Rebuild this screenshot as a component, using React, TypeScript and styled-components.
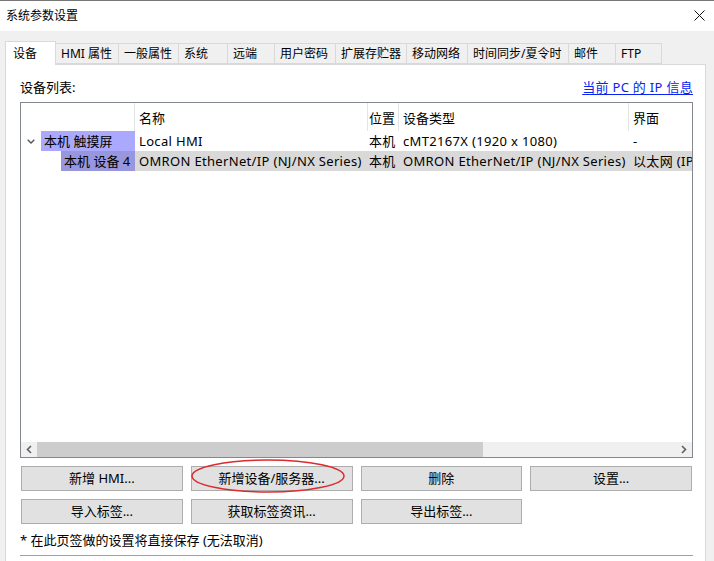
import React from 'react';
import styled, { createGlobalStyle } from 'styled-components';

const GlobalStyle = createGlobalStyle`
  html, body {
    margin: 0;
    padding: 0;
    background: #f0f0f0;
  }
  body {
    font-family: "Noto Sans", "Noto Sans CJK SC", sans-serif;
    font-size: 13px;
    color: #000;
  }
  * {
    box-sizing: border-box;
  }
`;

const Window = styled.div`
  width: 714px;
  height: 561px;
  overflow: hidden;
  display: flex;
  flex-direction: column;
  background: #f0f0f0;
`;

const TitleBar = styled.div`
  height: 31px;
  flex: none;
  display: flex;
  align-items: center;
  justify-content: space-between;
  padding: 0 9px 1px 6px;
  background: #fff;
  border-top: 1px solid #777;
  font-size: 12px;
  line-height: 16px;
`;

const Body = styled.div`
  flex: 1;
  display: flex;
  flex-direction: column;
  padding: 10px 8px 0 5px;
  min-height: 0;
`;

const TabStrip = styled.div`
  height: 23px;
  flex: none;
  display: flex;
  align-items: flex-end;
`;

const Tab = styled.div<{ $w: number; $active?: boolean }>`
  width: ${(p) => p.$w}px;
  height: ${(p) => (p.$active ? 24 : 21)}px;
  margin-bottom: ${(p) => (p.$active ? -1 : 0)}px;
  padding: ${(p) => (p.$active ? '3px 0 0 7px' : '1px 0 0 5px')};
  background: ${(p) => (p.$active ? '#fff' : '#f0f0f0')};
  border: 1px solid #d9d9d9;
  border-bottom: ${(p) => (p.$active ? 'none' : '1px solid #d9d9d9')};
  border-left: ${(p) => (p.$active ? '1px solid #d9d9d9' : 'none')};
  font-size: 12px;
  line-height: 18px;
  white-space: nowrap;
  position: relative;
  z-index: ${(p) => (p.$active ? 1 : 0)};
`;

const Panel = styled.div`
  flex: 1;
  display: flex;
  flex-direction: column;
  background: #fff;
  border: 1px solid #d9d9d9;
  border-bottom: none;
  padding: 0 12px 0 14px;
`;

const ListHeader = styled.div`
  height: 37px;
  display: flex;
  align-items: flex-end;
  justify-content: space-between;
  padding-bottom: 7px;
  line-height: 15px;
`;

const Link = styled.a`
  color: #0a23f0;
  text-decoration: underline;
  text-underline-offset: 2px;
  letter-spacing: 0.3px;
  cursor: pointer;
`;

const Table = styled.div`
  height: 356px;
  display: flex;
  flex-direction: column;
  border: 1px solid #828790;
  overflow: hidden;
`;

const cols = '114px 233px 31px 230px 1fr';

const HeadRow = styled.div`
  display: grid;
  grid-template-columns: ${cols};
  height: 28px;
  flex: none;
`;

const HeadCell = styled.div<{ $pad?: number }>`
  display: flex;
  align-items: center;
  padding-left: ${(p) => p.$pad ?? 4}px;
  border-right: 1px solid #e5e5e5;
  white-space: nowrap;
  overflow: hidden;
  &:last-child {
    border-right: none;
  }
`;

const Rows = styled.div`
  flex: 1;
`;

const Row = styled.div`
  display: grid;
  grid-template-columns: ${cols};
  height: 20px;
  line-height: 20px;
  white-space: nowrap;
  letter-spacing: 0.33px;
`;

const TreeCell = styled.div<{ $indent: number }>`
  display: flex;
  padding-left: ${(p) => p.$indent}px;
  position: relative;
  letter-spacing: 0;
`;

const Expander = styled.span`
  position: absolute;
  left: 6px;
  top: 8px;
  width: 8px;
  height: 5px;
  display: flex;
`;

const NodeLabel = styled.span<{ $bg: string }>`
  flex: 1;
  padding-left: 3px;
  background: ${(p) => p.$bg};
`;

const Cell = styled.div<{ $selected?: boolean; $pad?: number }>`
  padding-left: ${(p) => p.$pad ?? 4}px;
  overflow: hidden;
  background: ${(p) => (p.$selected ? '#d9d9d9' : 'transparent')};
`;

const HScroll = styled.div`
  height: 15px;
  flex: none;
  display: flex;
  background: #f0f0f0;
`;

const ScrollArrow = styled.div`
  width: 16px;
  display: flex;
  align-items: center;
  justify-content: center;
`;

const ScrollThumb = styled.div<{ $w: number }>`
  width: ${(p) => p.$w}px;
  background: #cdcdcd;
`;

const ScrollTrack = styled.div`
  flex: 1;
`;

const ButtonGrid = styled.div`
  display: grid;
  grid-template-columns: repeat(4, 1fr);
  gap: 8px;
  margin-top: 8px;
  padding: 0 1px;
`;

const Button = styled.button`
  height: 25px;
  position: relative;
  background: #e1e1e1;
  border: 1px solid #adadad;
  font-family: inherit;
  font-size: 13px;
  color: #000;
  padding: 0;
  line-height: 15px;
`;

const Circle = styled.svg`
  position: absolute;
  left: -2px;
  top: -8px;
  overflow: visible;
  pointer-events: none;
`;

const Note = styled.div`
  margin-top: 9px;
  line-height: 15px;
`;

const Separator = styled.div`
  margin-top: 7px;
  height: 1px;
  background: #a0a0a0;
`;

const tabs: [string, number][] = [
  ['设备', 51],
  ['HMI 属性', 63],
  ['一般属性', 60],
  ['系统', 49],
  ['远端', 47],
  ['用户密码', 61],
  ['扩展存贮器', 71],
  ['移动网络', 61],
  ['时间同步/夏令时', 101],
  ['邮件', 47],
  ['FTP', 46],
];

const Chevron = ({ dir }: { dir: 'left' | 'right' }) => (
  <svg width="6" height="9" viewBox="0 0 6 9">
    <path
      d={dir === 'left' ? 'M5 1 L1.5 4.5 L5 8' : 'M1 1 L4.5 4.5 L1 8'}
      fill="none"
      stroke="#606060"
      strokeWidth="1.6"
    />
  </svg>
);

const App: React.FC = () => (
  <>
    <GlobalStyle />
    <Window>
      <TitleBar>
        <span>系统参数设置</span>
        <svg width="11" height="11" viewBox="0 0 11 11">
          <path d="M0.5 0.5 L10.5 10.5 M10.5 0.5 L0.5 10.5" stroke="#111" strokeWidth="1" />
        </svg>
      </TitleBar>
      <Body>
        <TabStrip>
          {tabs.map(([label, w], i) => (
            <Tab key={label} $w={w} $active={i === 0}>
              {label}
            </Tab>
          ))}
        </TabStrip>
        <Panel>
          <ListHeader>
            <span>设备列表:</span>
            <Link>当前 PC 的 IP 信息</Link>
          </ListHeader>
          <Table>
            <HeadRow>
              <HeadCell />
              <HeadCell>名称</HeadCell>
              <HeadCell $pad={1}>位置</HeadCell>
              <HeadCell>设备类型</HeadCell>
              <HeadCell>界面</HeadCell>
            </HeadRow>
            <Rows>
              <Row>
                <TreeCell $indent={20}>
                  <Expander>
                    <svg width="8" height="5" viewBox="0 0 8 5">
                      <path d="M0.7 0.7 L4 4 L7.3 0.7" fill="none" stroke="#555" strokeWidth="1.4" />
                    </svg>
                  </Expander>
                  <NodeLabel $bg="#aaa9fe">本机 触摸屏</NodeLabel>
                </TreeCell>
                <Cell>Local HMI</Cell>
                <Cell $pad={1}>本机</Cell>
                <Cell>cMT2167X (1920 x 1080)</Cell>
                <Cell>-</Cell>
              </Row>
              <Row>
                <TreeCell $indent={40}>
                  <NodeLabel $bg="#9896dd">本机 设备 4</NodeLabel>
                </TreeCell>
                <Cell $selected>OMRON EtherNet/IP (NJ/NX Series)</Cell>
                <Cell $selected $pad={1}>本机</Cell>
                <Cell $selected>OMRON EtherNet/IP (NJ/NX Series)</Cell>
                <Cell $selected>以太网 (IP</Cell>
              </Row>
            </Rows>
            <HScroll>
              <ScrollArrow>
                <Chevron dir="left" />
              </ScrollArrow>
              <ScrollThumb $w={446} />
              <ScrollTrack />
              <ScrollArrow>
                <Chevron dir="right" />
              </ScrollArrow>
            </HScroll>
          </Table>
          <ButtonGrid>
            <Button>新增 HMI...</Button>
            <Button>
              新增设备/服务器...
              <Circle width="156" height="36" viewBox="0 0 156 36">
                <ellipse cx="78" cy="17" rx="76" ry="16" fill="none" stroke="#dc2a2e" strokeWidth="1.5" />
              </Circle>
            </Button>
            <Button>删除</Button>
            <Button>设置...</Button>
            <Button>导入标签...</Button>
            <Button>获取标签资讯...</Button>
            <Button>导出标签...</Button>
          </ButtonGrid>
          <Note>* 在此页签做的设置将直接保存 (无法取消)</Note>
          <Separator />
        </Panel>
      </Body>
    </Window>
  </>
);

export default App;
